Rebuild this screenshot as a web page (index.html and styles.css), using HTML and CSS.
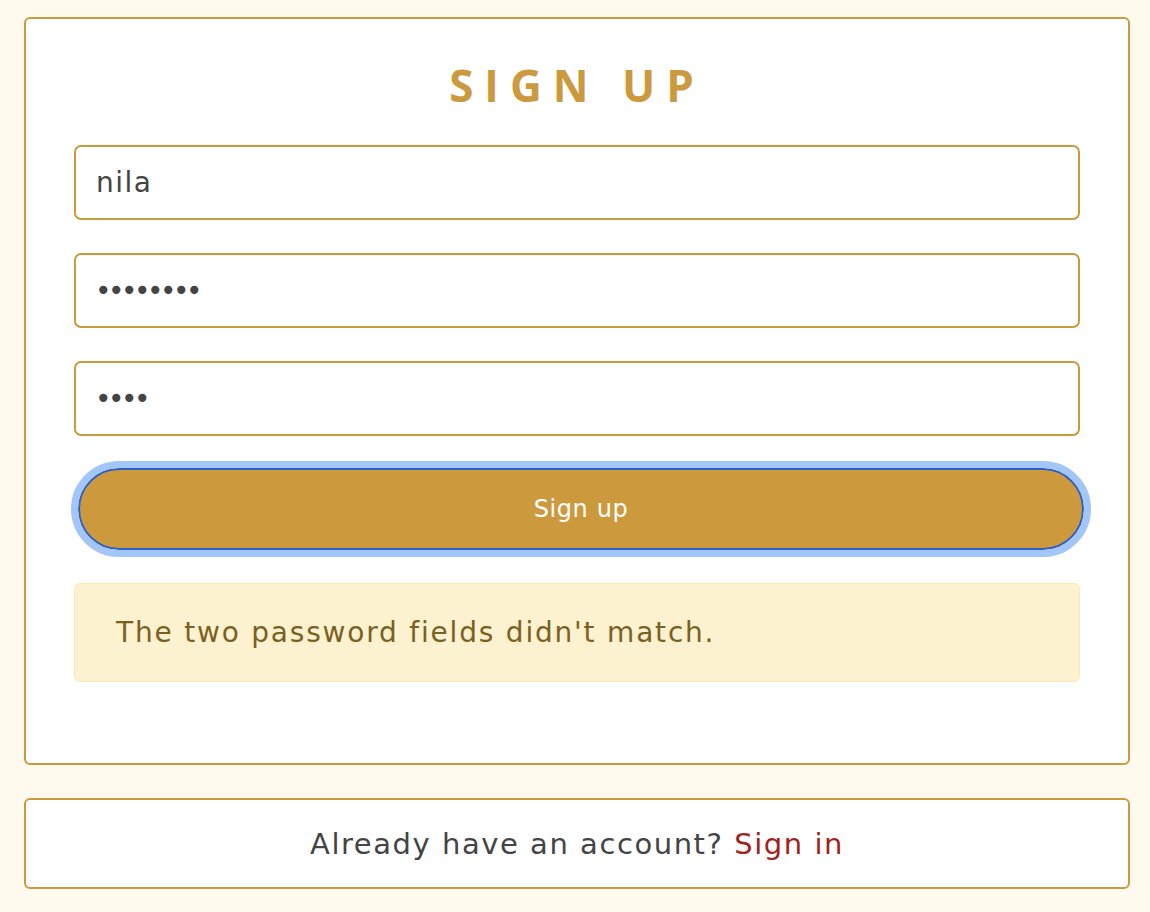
FILE: index.html
```html
<!DOCTYPE html>
<html lang="en">
<head>
<meta charset="utf-8">
<title>Sign up</title>
<link rel="stylesheet" href="styles.css">
</head>
<body>
<main class="page">
  <section class="card">
    <h1 class="title">SIGN UP</h1>
    <form class="form">
      <input class="field" type="text" value="nila">
      <input class="field secret" type="password" value="12345678">
      <input class="field secret" type="password" value="1234">
      <button class="btn" type="button">Sign up</button>
      <div class="alert">The two password fields didn't match.</div>
    </form>
  </section>
  <section class="card footer">
    <p class="footer-text">Already have an account? <a class="link" href="#">Sign in</a></p>
  </section>
</main>
</body>
</html>
```

FILE: styles.css
```css
* { box-sizing: border-box; }
html, body { margin: 0; padding: 0; }
body {
  background: #fefbee;
  font-family: "DejaVu Sans", "Open Sans", sans-serif;
  color: #444;
}
.page {
  padding: 17px 20px 0 24px;
  display: flex;
  flex-direction: column;
  gap: 33px;
}
.card {
  background: #fff;
  border: 2px solid #cc9a3e;
  border-radius: 6px;
}
.title {
  margin: 0;
  padding: 40px 0 34px;
  text-align: center;
  font-family: "Open Sans", sans-serif;
  font-size: 44px;
  line-height: 52px;
  font-weight: 700;
  letter-spacing: 11px;
  color: #cc9a3e;
}
.form {
  padding: 0 48px 81px;
  display: flex;
  flex-direction: column;
}
.field {
  height: 75px;
  border: 2px solid #cc9a3e;
  border-radius: 7px;
  padding: 0 20px;
  font-family: inherit;
  font-size: 28px;
  letter-spacing: 1.5px;
  color: #444;
  margin-bottom: 33px;
  outline: none;
}
.field.secret {
  letter-spacing: -3.5px;
  padding-left: 19px;
}
.btn {
  margin: -1px -4px 0 4px;
  height: 82px;
  border-radius: 41px;
  background: #cc993d;
  border: 2px solid #2d5fc8;
  outline: 7px solid #a2c6f8;
  color: #fff;
  font-family: inherit;
  font-size: 24px;
  letter-spacing: 0.6px;
}
.alert {
  margin-top: 33px;
  height: 99px;
  display: flex;
  align-items: center;
  padding: 0 41px;
  background: #fdf2d0;
  border: 1px solid #fbe8b2;
  border-radius: 6px;
  color: #7b6021;
  font-size: 28px;
  letter-spacing: 1.8px;
}
.footer {
  height: 91px;
  display: flex;
  align-items: center;
  justify-content: center;
  color: #444;
}
.footer-text {
  margin: 0;
  font-size: 29px;
  letter-spacing: 1.55px;
}
.link {
  color: #a0231c;
  text-decoration: none;
}
```
